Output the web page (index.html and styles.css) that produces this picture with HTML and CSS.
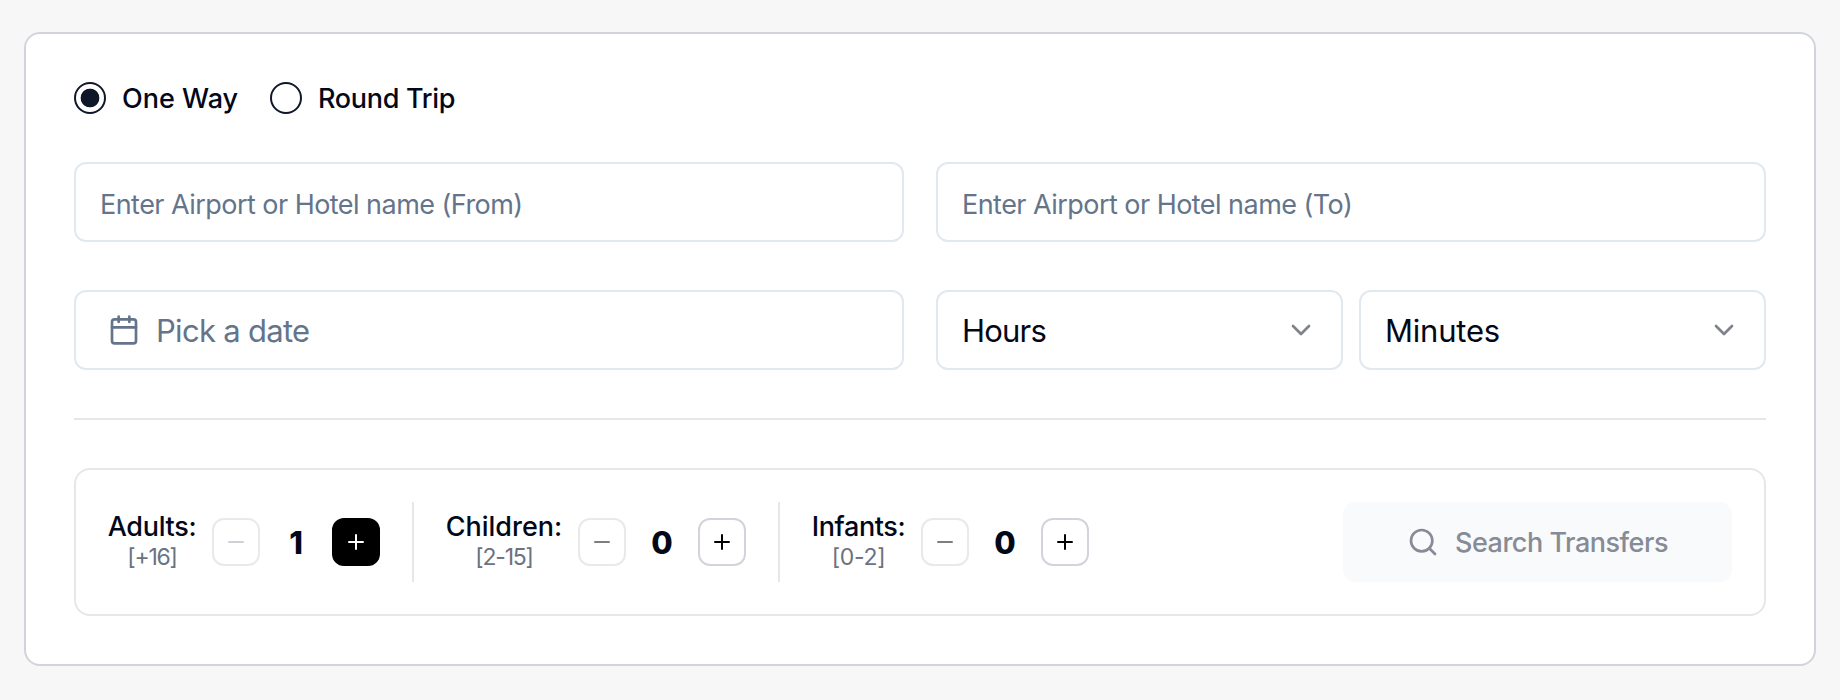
FILE: index.html
```
<!DOCTYPE html>
<html lang="en">
<head>
    <meta charset="UTF-8">
    <meta name="viewport" content="width=device-width, initial-scale=1.0">
    <title>Airport Transfers</title>
    <link rel="stylesheet" href="styles.css">
</head>
<body>
    <form class="card">
        <div class="trip-type">
            <label class="radio">
                <input type="radio" name="trip" checked>
                <span class="one-way">One Way</span>
            </label>
            <label class="radio">
                <input type="radio" name="trip">
                <span class="round-trip">Round Trip</span>
            </label>
        </div>

        <div class="row">
            <input class="field place" type="text" placeholder="Enter Airport or Hotel name (From)">
            <input class="field place" type="text" placeholder="Enter Airport or Hotel name (To)">
        </div>

        <div class="row">
            <button class="field date" type="button">
                <svg class="icon" viewBox="0 0 24 24">
                    <rect x="3" y="4" width="18" height="18" rx="2"/>
                    <path d="M16 2v4M8 2v4M3 10h18"/>
                </svg>
                <span>Pick a date</span>
            </button>
            <div class="time">
                <button class="field select" type="button">
                    <span class="hours">Hours</span>
                    <svg class="icon chevron" viewBox="0 0 24 24"><path d="m6 9 6 6 6-6"/></svg>
                </button>
                <button class="field select" type="button">
                    <span class="minutes">Minutes</span>
                    <svg class="icon chevron" viewBox="0 0 24 24"><path d="m6 9 6 6 6-6"/></svg>
                </button>
            </div>
        </div>

        <hr>

        <div class="passengers">
            <div class="group">
                <div class="label adults">
                    <span class="name">Adults:</span>
                    <span class="age">[+16]</span>
                </div>
                <button class="step minus muted" type="button" aria-label="Remove adult">
                    <svg viewBox="0 0 24 24"><path d="M5 12h14"/></svg>
                </button>
                <span class="count">1</span>
                <button class="step active" type="button" aria-label="Add adult">
                    <svg viewBox="0 0 24 24"><path d="M5 12h14M12 5v14"/></svg>
                </button>
            </div>
            <div class="group">
                <div class="label children">
                    <span class="name">Children:</span>
                    <span class="age">[2-15]</span>
                </div>
                <button class="step minus" type="button" aria-label="Remove child">
                    <svg viewBox="0 0 24 24"><path d="M5 12h14"/></svg>
                </button>
                <span class="count">0</span>
                <button class="step" type="button" aria-label="Add child">
                    <svg viewBox="0 0 24 24"><path d="M5 12h14M12 5v14"/></svg>
                </button>
            </div>
            <div class="group">
                <div class="label infants">
                    <span class="name">Infants:</span>
                    <span class="age">[0-2]</span>
                </div>
                <button class="step minus" type="button" aria-label="Remove infant">
                    <svg viewBox="0 0 24 24"><path d="M5 12h14"/></svg>
                </button>
                <span class="count">0</span>
                <button class="step" type="button" aria-label="Add infant">
                    <svg viewBox="0 0 24 24"><path d="M5 12h14M12 5v14"/></svg>
                </button>
            </div>
            <button class="search" type="button">
                <svg class="icon" viewBox="0 0 24 24">
                    <circle cx="11" cy="11" r="8"/>
                    <path d="m21 21-4.3-4.3"/>
                </svg>
                <span>Search Transfers</span>
            </button>
        </div>
    </form>
</body>
</html>
```
FILE: styles.css
```
* { box-sizing: border-box; }
body { margin: 0; padding: 32px 24px; background: #f7f7f7; color: #020817; font-family: Inter, sans-serif; }
button, input { margin: 0; font: inherit; color: inherit; background: none; }
svg { flex: none; fill: none; stroke: currentColor; stroke-width: 2; stroke-linecap: round; stroke-linejoin: round; }
.icon { width: 32px; height: 32px; }

.card { display: flex; flex-direction: column; gap: 48px; height: 634px; padding: 48px; background: #fff; border: 2px solid #d1d5db; border-radius: 16px; }

.trip-type { display: flex; gap: 32px; height: 32px; }
.radio { display: flex; align-items: center; gap: 16px; height: 32px; font-size: 27px; font-weight: 500; line-height: 32px; }
.radio input { appearance: none; width: 32px; height: 32px; border: 2px solid #0f172a; border-radius: 50%; }
.radio input:checked { background: radial-gradient(circle, #0f172a 9px, transparent 9.7px); }
.radio span { padding-top: 2px; white-space: nowrap; }
.one-way { width: 116px; }
.round-trip { letter-spacing: -0.3px; }

.row { display: grid; grid-template-columns: 1fr 1fr; gap: 32px; }
.field { display: flex; align-items: center; width: 100%; height: 80px; padding: 0 24px; border: 2px solid #e2e8f0; border-radius: 12px; font-size: 31px; text-align: left; }
.place { padding-top: 4px; font-size: 27px; letter-spacing: -0.54px; }
.place::placeholder { color: #64748b; opacity: 1; }
.date { gap: 16px; padding-left: 32px; color: #64748b; letter-spacing: -0.7px; }
.time { display: grid; grid-template-columns: 1fr 1fr; gap: 16px; }
.select { justify-content: space-between; }
.hours { letter-spacing: -0.8px; }
.minutes { letter-spacing: -0.2px; }
.chevron { opacity: 0.5; color: #020817; }

hr { width: 100%; height: 2px; margin: 0; border: 0; background: #e5e7eb; }

.passengers { display: flex; align-items: center; height: 148px; padding: 32px; border: 2px solid #e5e7eb; border-radius: 16px; }
.group { display: flex; align-items: center; height: 80px; }
.group + .group { margin-left: 32px; padding-left: 32px; border-left: 2px solid #e5e7eb; }
.label { display: flex; flex-direction: column; align-items: center; margin-right: 16px; padding-bottom: 1px; line-height: 30px; white-space: nowrap; }
.adults { width: 88px; }
.children { width: 116px; }
.infants { width: 93px; }
.name { font-size: 27px; font-weight: 500; letter-spacing: -0.3px; }
.children .name { letter-spacing: 0; }
.infants .name { letter-spacing: -0.4px; }
.age { font-size: 23px; color: #6b7280; letter-spacing: -1.2px; }
.infants .age { letter-spacing: -0.3px; }
.count { width: 72px; font-size: 31px; font-weight: 800; text-align: center; }
.step { display: flex; align-items: center; justify-content: center; width: 48px; height: 48px; padding: 0; border: 2px solid #d1d5db; border-radius: 12px; color: #000; }
.step svg { width: 24px; height: 24px; }
.minus { opacity: 0.5; }
.muted { color: #9ca3af; }
.active { background: #000; border-color: #000; color: #fff; }

.search { display: flex; align-items: center; justify-content: center; gap: 16px; width: 389px; height: 80px; margin-left: auto; padding: 0; border: 0; border-radius: 12px; background: #f9fafc; color: #868b96; font-size: 27px; font-weight: 500; letter-spacing: -0.48px; }
```
